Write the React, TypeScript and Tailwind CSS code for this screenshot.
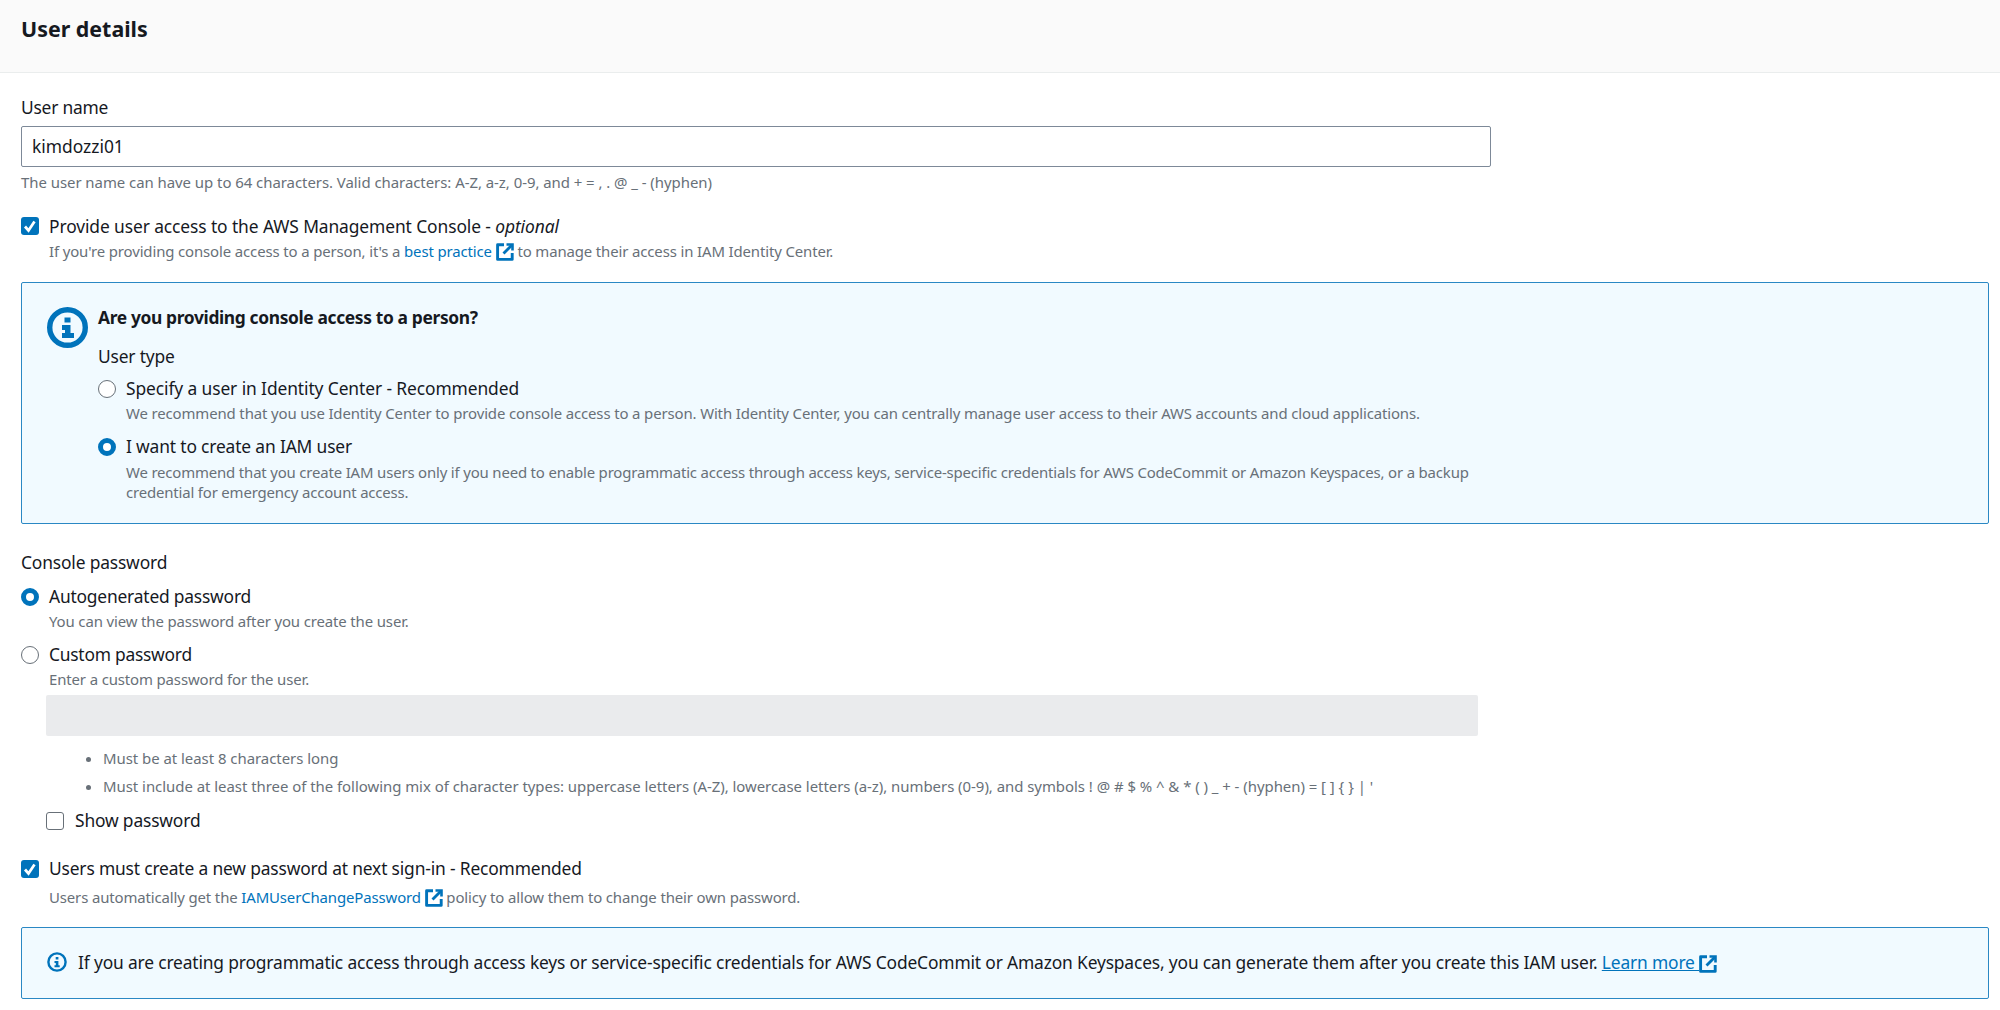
import type { ReactNode } from "react";

function ExternalIcon({ className = "" }: { className?: string }) {
  return (
    <svg viewBox="0 0 18 18" className={`inline-block w-[18px] h-[18px] align-[-4px] ${className}`} fill="none" stroke="#0073bb">
      <path d="M8 1.8H1.6v14.6h14.6V10" strokeWidth="2.9" strokeLinejoin="round" />
      <path d="M10.5 1.5h6V7.5" strokeWidth="2.6" />
      <path d="M16 2 7.5 10.5" strokeWidth="2.8" />
    </svg>
  );
}

function BigInfoIcon() {
  return (
    <svg viewBox="0 0 41 41" className="w-[41px] h-[41px] shrink-0">
      <circle cx="20.5" cy="20.5" r="17.8" fill="none" stroke="#0073bb" strokeWidth="5.4" />
      <rect x="17.5" y="10.5" width="6" height="5" fill="#0073bb" />
      <path d="M15 18h8.5v8H27v5H15v-5h3v-3h-3z" fill="#0073bb" />
    </svg>
  );
}

function SmallInfoIcon() {
  return (
    <svg viewBox="0 0 20 20" className="w-5 h-5 shrink-0">
      <circle cx="10" cy="10" r="8.6" fill="none" stroke="#0073bb" strokeWidth="2.4" />
      <rect x="8.7" y="5" width="2.7" height="2.5" fill="#0073bb" />
      <path d="M7.5 9h3.9v4.2h1.3v2H7.5v-2h1.3V11H7.5z" fill="#0073bb" />
    </svg>
  );
}

function Checkbox({ checked = false }: { checked?: boolean }) {
  if (!checked) {
    return <span className="w-[18px] h-[18px] shrink-0 rounded-[3px] border border-[#687078] bg-white" />;
  }
  return (
    <span className="w-[18px] h-[18px] shrink-0 rounded-[3px] bg-[#0073bb] flex items-center justify-center">
      <svg viewBox="0 0 18 18" className="w-[18px] h-[18px]" fill="none" stroke="white" strokeWidth="2.7">
        <path d="M4 9.5 7.5 13.5 13.5 4.5" />
      </svg>
    </span>
  );
}

function Radio({ checked = false }: { checked?: boolean }) {
  if (checked) {
    return <span className="w-[18px] h-[18px] shrink-0 rounded-full border-[5px] border-[#0073bb] bg-white" />;
  }
  return <span className="w-[18px] h-[18px] shrink-0 rounded-full border border-[#687078] bg-white" />;
}

function Option({ control, children, className = "", labelClass = "pb-[2px]" }: { control: ReactNode; children: ReactNode; className?: string; labelClass?: string }) {
  return (
    <div className={`flex items-center gap-[10px] h-6 text-[#16191f] text-[17.4px] tracking-[-0.16px] leading-6 ${className}`}>
      {control}
      <span className={labelClass}>{children}</span>
    </div>
  );
}

function Hint({ children, className = "" }: { children: ReactNode; className?: string }) {
  return <div className={`text-[14.95px] leading-5 tracking-[-0.13px] text-[#687078] ${className}`}>{children}</div>;
}

export default function App() {
  return (
    <div className="w-[2000px] h-[1010px] overflow-hidden bg-white font-['Noto_Sans',sans-serif]">
      {/* Section header */}
      <div className="h-[73px] bg-[#fafafa] border-b border-[#eaeded] pl-[21px] pt-[15px]">
        <h2 className="text-[21.4px] leading-7 font-bold text-[#16191f]">User details</h2>
      </div>

      <div className="pl-[21px] pr-[11px] pt-[22px]">
        <div className="text-[17.4px] tracking-[-0.22px] leading-6 text-[#16191f]">User name</div>
        <div className="mt-[7px] w-[1470px] h-[41px] border border-[#7d8998] rounded-[2px] flex items-center pl-[10px] text-[17.4px] text-[#16191f]">
          kimdozzi01
        </div>
        <Hint className="mt-[5px] !tracking-[-0.04px]">The user name can have up to 64 characters. Valid characters: A-Z, a-z, 0-9, and + = , . @ _ - (hyphen)</Hint>

        <Option className="mt-[22px] !tracking-[-0.1px]" labelClass="" control={<Checkbox checked />}>
          Provide user access to the AWS Management Console - <i>optional</i>
        </Option>
        <Hint className="mt-[3px] pl-[28px]">
          If you're providing console access to a person, it's a <span className="text-[#0073bb]">best practice</span> <ExternalIcon /> to manage their access in IAM Identity Center.
        </Hint>

        {/* Console access alert */}
        <div className="mt-[21px] h-[242px] border border-[#2a88c4] rounded-[2px] bg-[#f1faff] pl-[25px] pt-[22px] flex gap-[10px]">
          <div className="mt-[2px]">
            <BigInfoIcon />
          </div>
          <div>
            <div className="text-[17.4px] leading-6 font-bold tracking-[-0.36px] text-[#16191f]">Are you providing console access to a person?</div>
            <div className="mt-[15px] text-[17.4px] tracking-[-0.16px] leading-6 text-[#16191f]">User type</div>
            <Option className="mt-[9px] !tracking-[-0.1px]" control={<Radio />}>Specify a user in Identity Center - Recommended</Option>
            <Hint className="mt-[2px] pl-[28px]">We recommend that you use Identity Center to provide console access to a person. With Identity Center, you can centrally manage user access to their AWS accounts and cloud applications.</Hint>
            <Option className="mt-[12px]" control={<Radio checked />}>I want to create an IAM user</Option>
            <Hint className="mt-[3px] pl-[28px] w-[1400px] !tracking-[-0.17px]">We recommend that you create IAM users only if you need to enable programmatic access through access keys, service-specific credentials for AWS CodeCommit or Amazon Keyspaces, or a backup credential for emergency account access.</Hint>
          </div>
        </div>

        <div className="mt-[26px] text-[17.4px] tracking-[-0.16px] leading-6 text-[#16191f]">Console password</div>
        <Option className="mt-[11px] !tracking-[-0.2px]" control={<Radio checked />}>Autogenerated password</Option>
        <Hint className="mt-[2px] pl-[28px]">You can view the password after you create the user.</Hint>
        <Option className="mt-[12px] !tracking-[-0.24px]" control={<Radio />}>Custom password</Option>
        <Hint className="mt-[2px] pl-[28px]">Enter a custom password for the user.</Hint>

        <div className="pl-[25px]">
          <div className="mt-[6px] w-[1432px] h-[41px] bg-[#eaebed] rounded-[2px]" />
          <ul className="mt-[12px] pl-[57px] list-disc text-[14.95px] leading-5 tracking-[-0.03px] text-[#687078]">
            <li>Must be at least 8 characters long</li>
            <li className="mt-2">Must include at least three of the following mix of character types: uppercase letters (A-Z), lowercase letters (a-z), numbers (0-9), and symbols ! @ # $ % ^ &amp; * ( ) _ + - (hyphen) = [ ] {"{"} {"}"} | '</li>
          </ul>
          <Option className="mt-[13px] !gap-[11px]" control={<Checkbox />}>Show password</Option>
        </div>

        <Option className="mt-[24px]" control={<Checkbox checked />}>Users must create a new password at next sign-in - Recommended</Option>
        <Hint className="mt-[6px] pl-[28px]">
          Users automatically get the <span className="text-[#0073bb]">IAMUserChangePassword</span> <ExternalIcon /> policy to allow them to change their own password.
        </Hint>

        {/* Access keys note */}
        <div className="mt-[20px] h-[72px] border border-[#2a88c4] rounded-[2px] bg-[#f1faff] pl-[25px] pb-[2px] flex items-center gap-[11px] text-[17.4px] tracking-[-0.16px] text-[#16191f]">
          <SmallInfoIcon />
          <span>
            If you are creating programmatic access through access keys or service-specific credentials for AWS CodeCommit or Amazon Keyspaces, you can generate them after you create this IAM user. <span className="text-[#0073bb] underline">Learn more </span><ExternalIcon />
          </span>
        </div>
      </div>
    </div>
  );
}
